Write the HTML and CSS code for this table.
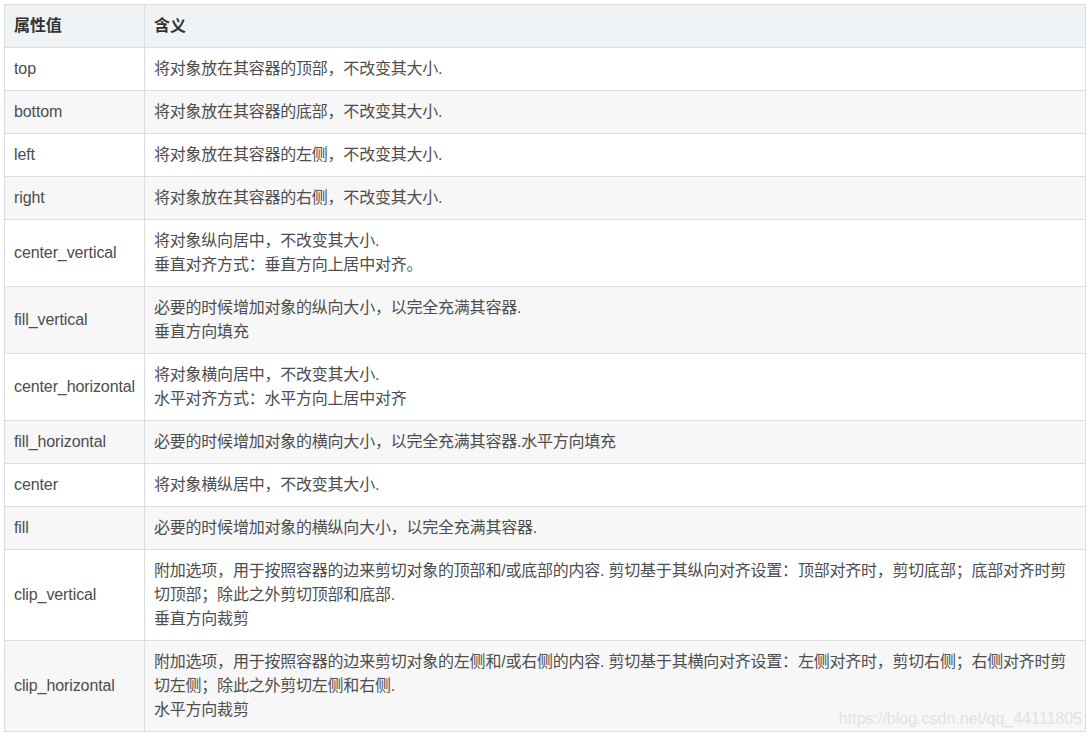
FILE: index.html
```html
<!DOCTYPE html>
<html lang="zh-CN">
<head>
<meta charset="utf-8">
<title>gravity</title>
<link rel="stylesheet" href="styles.css">
</head>
<body>
<div class="wrap">
<table class="attr-table">
<thead>
<tr><th class="c1">属性值</th><th>含义</th></tr>
</thead>
<tbody>
<tr><td>top</td><td class="desc">将对象放在其容器的顶部，不改变其大小.</td></tr>
<tr><td>bottom</td><td class="desc">将对象放在其容器的底部，不改变其大小.</td></tr>
<tr><td>left</td><td class="desc">将对象放在其容器的左侧，不改变其大小.</td></tr>
<tr><td>right</td><td class="desc">将对象放在其容器的右侧，不改变其大小.</td></tr>
<tr><td>center_vertical</td><td class="desc">将对象纵向居中，不改变其大小.<br>垂直对齐方式：垂直方向上居中对齐。</td></tr>
<tr><td>fill_vertical</td><td class="desc">必要的时候增加对象的纵向大小，以完全充满其容器.<br>垂直方向填充</td></tr>
<tr><td>center_horizontal</td><td class="desc">将对象横向居中，不改变其大小.<br>水平对齐方式：水平方向上居中对齐</td></tr>
<tr><td>fill_horizontal</td><td class="desc">必要的时候增加对象的横向大小，以完全充满其容器.水平方向填充</td></tr>
<tr><td>center</td><td class="desc">将对象横纵居中，不改变其大小.</td></tr>
<tr><td>fill</td><td class="desc">必要的时候增加对象的横纵向大小，以完全充满其容器.</td></tr>
<tr><td>clip_vertical</td><td class="desc">附加选项，用于按照容器的边来剪切对象的顶部和/或底部的内容. 剪切基于其纵向对齐设置：顶部对齐时，剪切底部；底部对齐时剪切顶部；除此之外剪切顶部和底部.<br>垂直方向裁剪</td></tr>
<tr><td>clip_horizontal</td><td class="desc">附加选项，用于按照容器的边来剪切对象的左侧和/或右侧的内容. 剪切基于其横向对齐设置：左侧对齐时，剪切右侧；右侧对齐时剪切左侧；除此之外剪切左侧和右侧.<br>水平方向裁剪</td></tr>
</tbody>
</table>
<span class="watermark">https://blog.csdn.net/qq_44111805</span>
</div>
</body>
</html>
```
FILE: styles.css
```css
html, body {
  margin: 0;
  padding: 0;
  background: #ffffff;
}
body {
  padding: 4px 6px 0 4px;
  font-family: "Liberation Sans", "Noto Sans CJK SC", sans-serif;
  font-size: 16px;
  line-height: 24px;
  color: #4d4d4d;
}
.wrap {
  position: relative;
  width: 1082px;
}
.attr-table {
  width: 1082px;
  border-collapse: collapse;
  table-layout: fixed;
}
.attr-table th,
.attr-table td {
  border: 1px solid #dddddd;
  padding: 9px 9px 9px 9px;
  text-align: left;
  vertical-align: middle;
  letter-spacing: -0.1px;
}
.attr-table .desc {
  letter-spacing: -0.22px;
}
.attr-table th {
  background: #eff3f5;
  font-weight: bold;
  color: #333333;
}
.attr-table .c1 {
  width: 121px;
}
.attr-table tbody tr:nth-child(even) td {
  background: #f7f7f7;
}
.attr-table tbody tr:nth-child(odd) td {
  background: #ffffff;
}
.watermark {
  position: absolute;
  right: 4px;
  bottom: 4px;
  font-size: 16px;
  line-height: 18px;
  color: #e2e2e2;
  letter-spacing: 0;
}
```
